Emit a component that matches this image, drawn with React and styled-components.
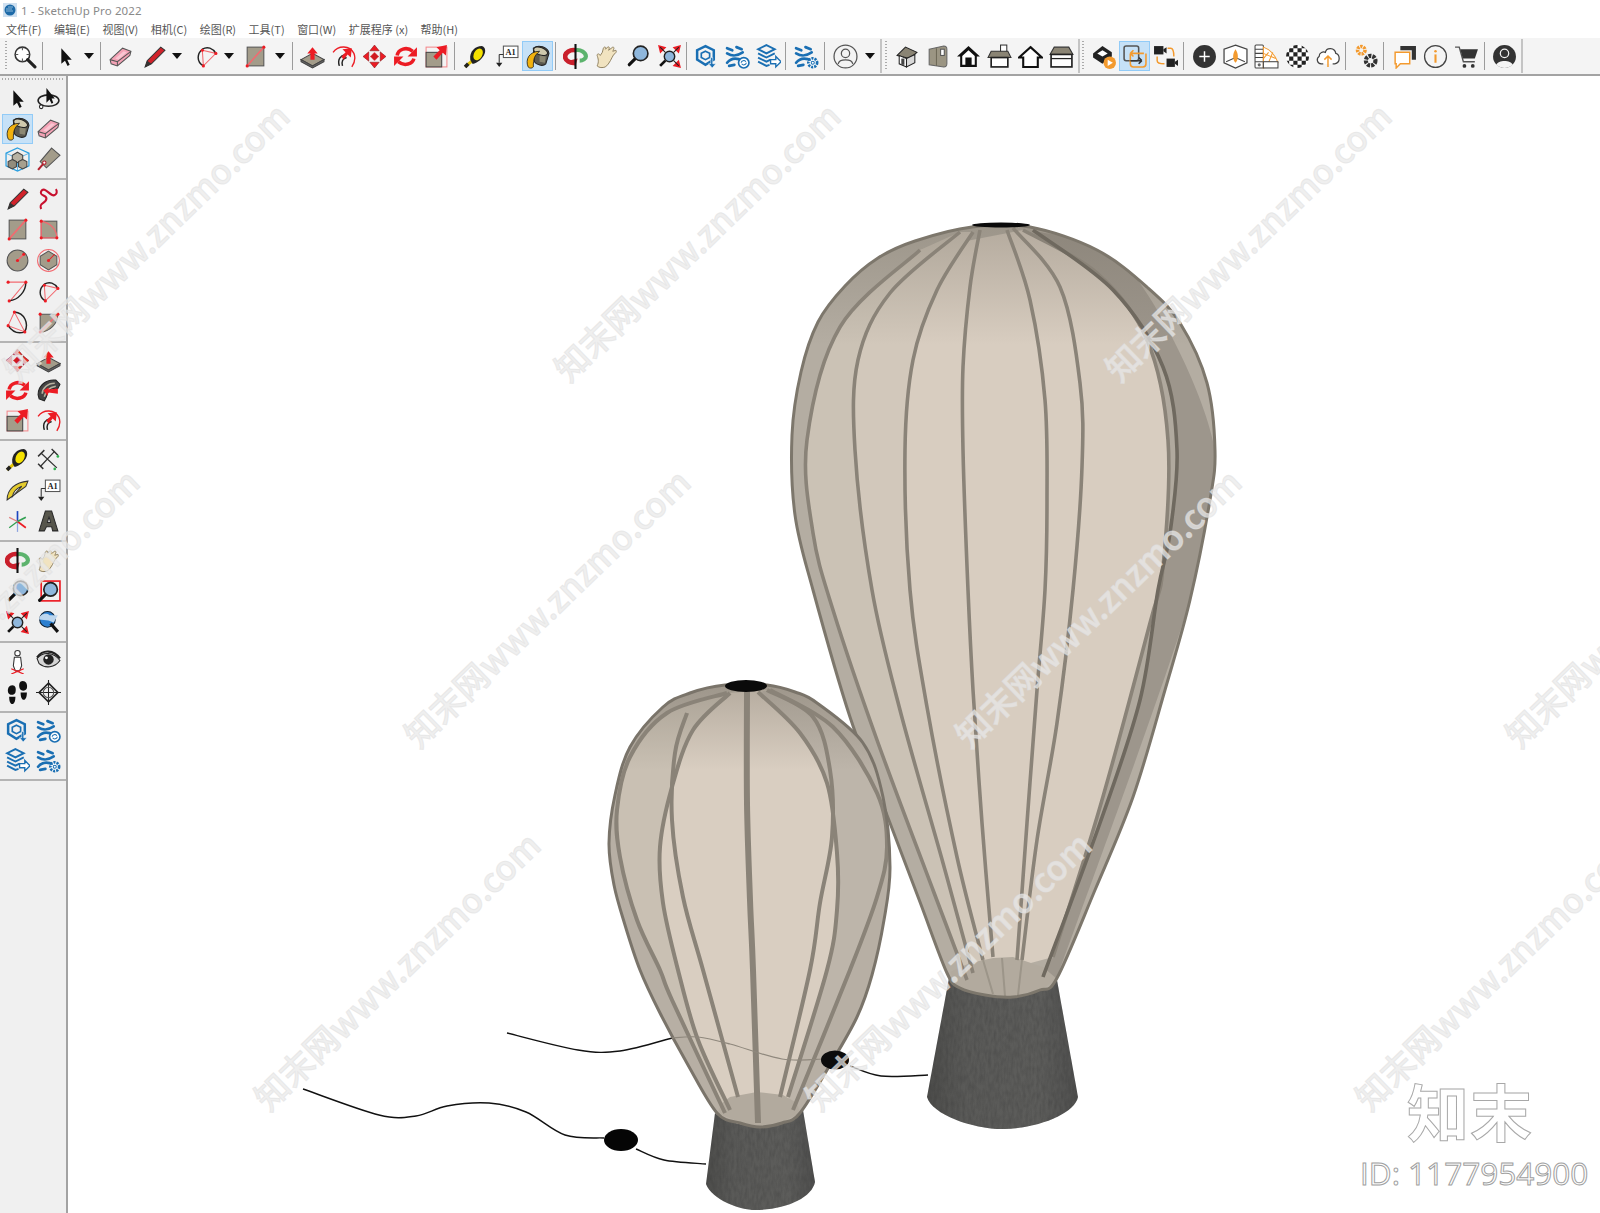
import React from 'react';
import styled, { createGlobalStyle } from 'styled-components';

const R = '#ec1c24';
const FACE = '#a39c8a';
const BLUE = '#1a6fb3';
const ORANGE = '#f39a2e';
const DARK = '#333';

const GlobalStyle = createGlobalStyle`
    html, body {
        margin: 0;
        padding: 0;
        background: #fff;
        overflow: hidden;
    }
`;

const Window = styled.div`
    position: relative;
    width: 1600px;
    height: 1213px;
    overflow: hidden;
    display: flex;
    flex-direction: column;
    background: #fff;
    font-family: "Noto Sans CJK SC", "Noto Sans", sans-serif;
`;

const TitleBar = styled.div`
    height: 20px;
    display: flex;
    align-items: center;
    gap: 4px;
    padding-left: 3px;
    font-family: "Noto Sans", sans-serif;
    font-size: 11.5px;
    letter-spacing: 0.12px;
    color: #8a8a8a;
`;

const MenuBar = styled.div`
    height: 18px;
    display: flex;
    align-items: center;
    gap: 12.5px;
    padding-left: 6px;
    font-size: 11px;
    color: #555;
`;

const MenuItem = styled.span`
    white-space: pre;
    line-height: 18px;
`;

const Toolbar = styled.div`
    height: 36px;
    flex: none;
    display: flex;
    align-items: center;
    padding-left: 3px;
    background: #f4f4f4;
    border-bottom: 2px solid #a3a3a3;
`;

const Grip = styled.div`
    flex: none;
    width: 2px;
    height: 30px;
    margin: 0 ${props => props.$after}px 0 ${props => props.$before}px;
    background-image: linear-gradient(#aaa 50%, transparent 50%);
    background-size: 2px 3px;
`;

const Tool = styled.div`
    flex: none;
    width: 31px;
    height: 30px;
    box-sizing: border-box;
    margin-left: ${props => props.$ml || 0}px;
    display: flex;
    align-items: center;
    justify-content: center;
    background: ${props => (props.$active ? '#c6e1f7' : 'transparent')};
    border: 1px solid ${props => (props.$active ? '#92cbf7' : 'transparent')};
`;

const Caret = styled.div`
    flex: none;
    width: ${props => props.$w}px;
    margin-left: ${props => props.$ml || 0}px;
    display: flex;
    justify-content: center;

    &::after {
        content: '';
        border-left: 5px solid transparent;
        border-right: 5px solid transparent;
        border-top: 6px solid #111;
    }
`;

const Divider = styled.div`
    flex: none;
    width: 1px;
    height: 28px;
    background: #9c9c9c;
    margin-left: ${props => (props.$before === undefined ? 2 : props.$before)}px;
    margin-right: ${props => (props.$after === undefined ? 5 : props.$after)}px;
`;

const ToolbarEnd = styled.div`
    flex: none;
    width: 2px;
    height: 34px;
    margin: 0 ${props => props.$after}px 0 ${props => props.$before}px;
    background: #c4c4c4;
`;

const Body = styled.div`
    flex: 1;
    display: flex;
    min-height: 0;
`;

const SideBar = styled.div`
    width: 66px;
    flex: none;
    padding-top: 2px;
    background: #f0f0f0;
    border-right: 2px solid #a3a3a3;
`;

const SideGrip = styled.div`
    height: 2px;
    margin: 0 2px 3px;
    background-image: linear-gradient(90deg, #aaa 50%, transparent 50%);
    background-size: 3px 2px;
`;

const SideGroup = styled.div`
    display: grid;
    grid-template-columns: 31px 31px;
    grid-auto-rows: ${props => props.$row || 30}px;
    padding: 0 2px 3px;
    justify-items: center;
    align-items: center;
    margin-bottom: 3px;
    border-bottom: 2px solid #b4b4b4;
`;

const SideTool = styled(Tool)`
    height: ${props => (props.$active ? 30 : 28)}px;
`;

const Canvas = styled.div`
    flex: 1;
    min-width: 0;
    background: #fff;
`;

const Scene = styled.svg`
    display: block;
    width: 100%;
    height: 100%;
`;

const IconSvg = styled.svg`
    display: block;
    width: 25px;
    height: 25px;
    flex: none;
`;

const AppGlyph = styled.svg`
    width: 14px;
    height: 14px;
    flex: none;
`;

const WatermarkLayer = styled.div`
    position: absolute;
    inset: 0;
    overflow: hidden;
    pointer-events: none;
`;

const Watermark = styled.span`
    position: absolute;
    white-space: pre;
    font-family: "Noto Sans CJK SC", sans-serif;
    font-size: 34px;
    font-weight: 500;
    line-height: 1;
    color: rgba(234, 234, 234, 0.74);
    -webkit-text-stroke: 1px rgba(224, 224, 224, 0.6);
    transform-origin: 0 100%;
    transform: rotate(-44deg);
`;

const BrandMark = styled.div`
    position: absolute;
    left: 1407px;
    top: 1073px;
    font-family: "Noto Sans CJK SC", sans-serif;
    font-size: 62px;
    font-weight: 700;
    line-height: 1.2;
    letter-spacing: 1px;
    color: #fff;
    -webkit-text-stroke: 1px #a8a8a8;
`;

const BrandId = styled.div`
    position: absolute;
    left: 1360px;
    top: 1153px;
    font-family: "Open Sans", sans-serif;
    font-size: 31.5px;
    line-height: 40px;
    white-space: pre;
    color: #fff;
    -webkit-text-stroke: 1px #a0a0a0;
`;

// ---- icons, all on a 24 box ----

const lens = (cx, cy, r) => (
    <>
        <line x1={cx - r * 0.7} y1={cy + r * 0.7} x2={cx - r * 0.7 - 6} y2={cy + r * 0.7 + 6} stroke="#111" strokeWidth="3" strokeLinecap="round" />
        <circle cx={cx} cy={cy} r={r} fill="#8fb7dc" stroke="#222" strokeWidth="1.6" />
    </>
);

const dot = (x, y) => <circle cx={x} cy={y} r="1.5" fill={R} />;

const Bars = ({ color = BLUE }) => (
    <g fill="none" stroke={color} strokeWidth="2.6" strokeLinecap="round">
        <path d="M2 4 L7 6 M11 3 L16 5 M2 9 C7 12 11 12 17 8" />
        <path d="M2 18 C6 13 11 13 17 16 M4 21 L9 20" />
    </g>
);

const ICONS = {
    zoomGray: (
        <>
            <circle cx="10" cy="10" r="7" fill="#fff" stroke="#333" strokeWidth="1.5" />
            <path d="M10 3v3M10 14v3M3 10h3M14 10h3" stroke="#555" />
            <line x1="15" y1="15" x2="22" y2="22" stroke="#222" strokeWidth="3" strokeLinecap="round" />
        </>
    ),
    select: <path d="M8 4 L8 19 L11.5 16 L14 21 L16 20 L13.7 15 L18 15 Z" fill="#111" />,
    orbitSelect: (
        <>
            <ellipse cx="12" cy="14" rx="10" ry="5.5" fill="none" stroke="#222" strokeWidth="1.5" />
            <path d="M10 2 L10 16 L13 13 L15 17 L16.5 16 L15 12 L18 12 Z" fill="#111" />
            <circle cx="5" cy="20" r="1.7" fill="#fff" stroke="#222" />
        </>
    ),
    eraser: (
        <>
            <path d="M2 15 L14 4 L22 7 L21 11 L9 21 L3 19 Z" fill="#f4a3b6" stroke="#555" />
            <path d="M2 15 L9 17 L22 7 M9 17 L9 21" fill="none" stroke="#555" />
            <path d="M7 14 L15 7 L18 8 L10 15 Z" fill="#f9c6d2" />
        </>
    ),
    pencil: (
        <>
            <path d="M3 22 L5 16 L18 3 L22 6 L9 19 Z" fill="#d1232b" stroke="#333" />
            <path d="M3 22 L5 16 L9 19 Z" fill="#333" />
        </>
    ),
    freehand: (
        <path d="M5 22 C2 16 10 17 10 12 C10 8 3 10 5 5 C8 0 13 9 17 9 C21 8 20 4 19 3" fill="none" stroke="#c8102e" strokeWidth="2" />
    ),
    rect: (
        <>
            <rect x="4" y="3" width="16" height="18" fill={FACE} stroke="#555" />
            <line x1="4" y1="21" x2="20" y2="3" stroke="#f26a70" strokeWidth="1.5" />
            {dot(4, 21)}
            {dot(20, 3)}
        </>
    ),
    rotRect: (
        <>
            <rect x="5" y="4" width="15" height="16" fill={FACE} stroke="#555" />
            <path d="M5 4V20H20 C20 12 14 6 5 4" fill="none" stroke="#f26a70" strokeWidth="1.3" />
            {dot(5, 4)}
            {dot(5, 20)}
            {dot(20, 20)}
        </>
    ),
    circle: (
        <>
            <circle cx="12" cy="12" r="10" fill={FACE} stroke="#555" />
            <line x1="12" y1="12" x2="18" y2="6" stroke="#f26a70" strokeWidth="1.5" />
            {dot(12, 12)}
            {dot(18, 6)}
        </>
    ),
    polygon: (
        <>
            <circle cx="12" cy="12" r="10.5" fill="none" stroke="#f26a70" />
            <path d="M12 3 L20 8 L20 16 L12 21 L4 16 L4 8 Z" fill={FACE} stroke="#555" />
            <line x1="12" y1="12" x2="18" y2="6" stroke={R} />
            {dot(12, 12)}
        </>
    ),
    arc: (
        <>
            <path d="M3 3 H20 L5 21" fill="none" stroke="#f26a70" />
            <path d="M20 3 C20 12 13 20 4 21" fill="none" stroke="#222" strokeWidth="1.4" />
            {dot(3, 3)}
            {dot(20, 3)}
            {dot(4, 21)}
        </>
    ),
    arcPie: (
        <>
            <path d="M8 6 L21 9 L9 21 Z" fill="none" stroke="#f26a70" />
            <path d="M9 21 C2 17 3 9 8 5 C13 2 18 4 21 9" fill="none" stroke="#222" strokeWidth="1.4" />
            {dot(8, 6)}
            {dot(21, 9)}
            {dot(9, 21)}
        </>
    ),
    arc3: (
        <>
            <path d="M9 2 L3 15 L19 21 Z" fill="none" stroke="#f26a70" />
            <path d="M9 2 C19 3 23 13 19 21 C13 23 7 21 3 15" fill="none" stroke="#222" strokeWidth="1.4" />
            {dot(9, 2)}
            {dot(3, 15)}
            {dot(19, 21)}
        </>
    ),
    pie: (
        <>
            <path d="M4 21 L4 4 L21 4 C21 13 13 21 4 21 Z" fill={FACE} stroke="#555" />
            <line x1="4" y1="21" x2="21" y2="4" stroke="#f26a70" strokeWidth="1.4" />
            {dot(4, 21)}
            {dot(4, 4)}
            {dot(21, 4)}
        </>
    ),
    pushpull: (
        <>
            <path d="M1 15 L12 9 L23 15 L12 21 Z" fill={FACE} stroke="#444" />
            <path d="M1 15 V17 L12 23 L23 17 V15 L12 21 Z" fill="#666" stroke="#444" />
            <path d="M12 3 L17 9 H14 V15 H10 V9 H7 Z" fill={R} />
        </>
    ),
    followme: (
        <>
            <path d="M2 8 C7 1 18 1 22 9 C24 14 22 19 20 22" fill="none" stroke={R} strokeWidth="1.3" />
            <path d="M8 21 C6 15 9 11 14 10 M11 21 C10 17 11 14 15 13" fill="none" stroke="#222" strokeWidth="1.4" />
            <path d="M20 4 L19 13 L16 10 L12 15 L10 12 L14 8 L11 5 Z" fill={R} />
        </>
    ),
    move: (
        <>
            <path d="M12 1 L16.5 6.5 H7.5 Z M12 23 L7.5 17.5 H16.5 Z M1 12 L6.5 7.5 V16.5 Z M23 12 L17.5 16.5 V7.5 Z" fill={R} stroke="#7a1115" strokeWidth="0.5" />
            <path d="M12 7.5 L16.5 12 L12 16.5 L7.5 12 Z" fill="#d01a20" stroke="#f4f4f4" strokeWidth="0.8" />
        </>
    ),
    rotate: (
        <>
            <path d="M4 11 C5 5 13 2 19 7" fill="none" stroke={R} strokeWidth="3.4" />
            <path d="M23 3 V12 H14 Z" fill={R} />
            <path d="M20 14 C19 19 11 22 5 17" fill="none" stroke={R} strokeWidth="3.4" />
            <path d="M1 21 V12 H10 Z" fill={R} />
        </>
    ),
    scale: (
        <>
            <rect x="2" y="3" width="20" height="19" fill="none" stroke="#f4888c" />
            <rect x="2" y="8" width="15" height="14" fill={FACE} stroke="#444" />
            <path d="M22 1 L21 11 L18 8.5 L12 15 L9 12 L15 6 L12 3 Z" fill={R} />
        </>
    ),
    tape: (
        <>
            <line x1="2" y1="22" x2="9" y2="16" stroke="#e2c400" strokeWidth="3" />
            <line x1="2" y1="22" x2="5" y2="19" stroke="#222" strokeWidth="3.5" />
            <path d="M7 15 C6 7 12 2 18 2 C22 3 22 8 20 11 C17 16 12 19 9 19 Z" fill="#222" />
            <ellipse cx="14.5" cy="10" rx="4" ry="6" transform="rotate(30 14.5 10)" fill="#f6e200" />
        </>
    ),
    protractor: (
        <>
            <path d="M2 21 C2 11 10 4 22 3 L20 8 Z" fill="#e5cc2e" stroke="#333" />
            <path d="M7 18 C8 13 11 10 16 8 Z" fill="#fff" stroke="#333" />
        </>
    ),
    text: (
        <>
            <rect x="9" y="2" width="14" height="11" fill="#fff" stroke="#555" />
            <text x="16" y="10.5" textAnchor="middle" fontSize="8" fontFamily="Liberation Serif, serif" fontWeight="700" fill="#222">A1</text>
            <path d="M5 10 V18 M9 10 H5" fill="none" stroke="#333" />
            <path d="M2 18 H8 L5 22 Z" fill="#222" />
        </>
    ),
    paint: (
        <>
            <path d="M8 4 C13 0 22 3 23 9 L20 19 C17 22 11 20 9 17 Z" fill="#5c5a50" stroke="#222" />
            <ellipse cx="15" cy="7" rx="7" ry="3.6" transform="rotate(20 15 7)" fill="#cfc9ad" stroke="#222" />
            <path d="M3 22 C0 15 4 7 14 7 C9 11 8 14 8 22 C6 24 4 23 3 22 Z" fill="#f1b10e" stroke="#222" strokeWidth="0.8" />
            <path d="M14 11 L20 12 L19 18 L14 17 Z" fill="#8c8873" />
        </>
    ),
    component: (
        <>
            <path d="M12 1 L23 6 V18 L12 23 L1 18 V6 Z" fill="none" stroke="#2a9fe0" strokeWidth="1.2" />
            <path d="M1 6 L12 11 L23 6 M12 11 V23" fill="none" stroke="#2a9fe0" strokeWidth="0.7" />
            <path d="M12 5 L17 8 V12 L12 15 L7 12 V8 Z" fill="#b8b2a2" stroke="#444" />
            <path d="M7 12 L11 14 V19 L7 21 L3 19 V14 Z" fill="#928c7c" stroke="#444" />
            <path d="M17 12 L21 14 V19 L17 21 L13 19 V14 Z" fill="#a6a08f" stroke="#444" />
        </>
    ),
    tag: (
        <>
            <path d="M15 1 L23 8 L10 20 L4 14 Z" fill={FACE} stroke="#555" />
            <line x1="2" y1="22" x2="8" y2="15" stroke="#b21f2d" strokeWidth="2" />
            <circle cx="8" cy="15" r="1.6" fill="#fff" stroke="#b21f2d" />
        </>
    ),
    sweep: (
        <>
            <path d="M2 16 C2 7 10 1 19 2 L23 6 L21 10 C15 9 11 12 10 18 L8 22 L3 20 Z" fill="#444" stroke="#222" />
            <path d="M6 15 C6 10 11 5 18 5 M8 18 C9 13 13 9 19 8" fill="none" stroke="#b9b29f" strokeWidth="1.5" />
            <path d="M21 10 L21 15 L12 14 L11 17 L7 12 L12 9 L12 11 Z" fill={R} />
        </>
    ),
    dims: (
        <>
            <path d="M5 6 L20 20 M18 4 L4 19" fill="none" stroke="#333" strokeWidth="1.2" />
            <path d="M2 9 L8 3 M15 2 L21 8 M2 16 L7 21" fill="none" stroke="#333" strokeWidth="1.4" />
            <circle cx="21" cy="9" r="1.3" fill="#30b050" />
            <circle cx="18" cy="21" r="1.3" fill="#30b050" />
        </>
    ),
    axes: (
        <>
            <line x1="12" y1="12" x2="12" y2="2" stroke="#1c46c0" strokeWidth="1.6" />
            <line x1="12" y1="12" x2="12" y2="22" stroke="#8fa5e0" strokeWidth="1.2" />
            <line x1="12" y1="12" x2="20" y2="18" stroke={R} strokeWidth="1.6" />
            <line x1="12" y1="12" x2="4" y2="18" stroke="#30a050" strokeWidth="1.2" />
            <line x1="12" y1="12" x2="20" y2="8" stroke="#30a050" strokeWidth="1.6" />
            <line x1="12" y1="12" x2="4" y2="8" stroke="#e08080" strokeWidth="1.2" />
        </>
    ),
    text3d: (
        <path d="M9 2 H15 L21 21 H16 L15 17 H10 L8 21 H3 Z M11 13 H14 L12.5 7 Z" fill="#57564c" stroke="#2a2a2a" fillRule="evenodd" />
    ),
    orbit: (
        <>
            <path d="M12 6 C7 5 2 8 2 12 C2 16 7 19 12 18" fill="none" stroke="#c9202c" strokeWidth="4.5" />
            <path d="M5 16 L14 14 L12 21 Z" fill="#c9202c" />
            <path d="M12 6 C17 5 22 8 22 12 C22 14 19 16 16 16" fill="none" stroke="#5cb36d" strokeWidth="4" />
            <line x1="12" y1="0" x2="12" y2="24" stroke="#111" strokeWidth="2" />
        </>
    ),
    pan: (
        <path
            d="M3 21 C5 17 4 14 3 11 C3 9 5 9 6 11 L8 8 L9 4 C10 2 12 3 11 5 L13 3 C15 2 15 4 14 6 L18 3 C20 3 19 5 18 7 L21 6 C22 7 21 9 19 10 C17 13 15 19 11 22 C8 23 5 23 3 21 Z"
            fill="#f1e3c0"
            stroke="#8c7d5c"
            strokeWidth="0.9"
        />
    ),
    zoom: lens(15, 9, 7),
    zoomWindow: (
        <>
            <rect x="5" y="2" width="18" height="19" fill="none" stroke={R} strokeWidth="1.6" />
            {lens(14, 10, 6.5)}
        </>
    ),
    zoomExt: (
        <>
            <line x1="8" y1="16" x2="3" y2="21" stroke="#111" strokeWidth="2.6" />
            <circle cx="12" cy="12" r="5" fill="#8fb7dc" stroke="#222" strokeWidth="1.4" />
            <path d="M1 1 L9 3 L3 9 Z M23 1 L15 3 L21 9 Z M23 23 L21 15 L15 21 Z" fill={R} />
            <path d="M3 3 L8 8 M21 3 L16 8 M21 21 L16 16" stroke="#222" />
        </>
    ),
    zoomPrev: (
        <>
            <circle cx="11" cy="9" r="7.5" fill="#2b7fd0" stroke="#123" />
            <path d="M3 9 C3 4 10 2 13 5 L21 5 L17 12 L12 10 Z" fill="#bcd6ee" />
            <line x1="14" y1="13" x2="21" y2="21" stroke="#111" strokeWidth="3" />
        </>
    ),
    position: (
        <>
            <circle cx="12" cy="4" r="2.6" fill="#fff" stroke="#333" />
            <path d="M9 8 H15 L16 16 L14 21 H10 L8 16 Z" fill="#fff" stroke="#333" />
            <path d="M6 19 L18 24 M18 19 L6 24" stroke={R} strokeWidth="1.2" />
        </>
    ),
    lookAround: (
        <>
            <path d="M1 9 C7 2 17 3 23 11 C18 18 9 19 3 14 Z" fill="#d4d4d4" stroke="#222" />
            <circle cx="12" cy="10" r="5" fill="#222" />
            <circle cx="10" cy="8.5" r="1.4" fill="#fff" />
            <path d="M1 8 C7 0 17 1 23 9" fill="none" stroke="#222" strokeWidth="2" />
        </>
    ),
    walk: (
        <>
            <path d="M7 5 C10 5 11 8 10 12 C9 15 4 15 3 12 C2 8 4 5 7 5 Z M4 16 H10 C10 20 9 23 7 23 C5 23 4 20 4 16 Z" fill="#111" />
            <path d="M17 1 C20 1 22 4 21 8 C20 11 15 11 14 8 C13 4 14 1 17 1 Z M15 12 H21 C21 16 20 19 18 19 C16 19 15 16 15 12 Z" fill="#111" />
        </>
    ),
    section: (
        <>
            <path d="M12 3 L21 12 L12 21 L3 12 Z" fill="none" stroke="#222" strokeWidth="1.6" />
            <path d="M0 12 H24 M12 0 V24" stroke="#222" />
            <circle cx="12" cy="12" r="5" fill="none" stroke="#555" />
        </>
    ),
    wh3d: (
        <>
            <path d="M11 2 L19 6 V15 L11 20 L3 15 V6 Z" fill="none" stroke={BLUE} strokeWidth="2.4" />
            <path d="M11 7 L15 9 V13 L11 15 L7 13 V9 Z" fill="none" stroke={BLUE} strokeWidth="1.6" />
            <path d="M18 13 V19 H21 L17.5 23 L14 19 H16 V13 Z" fill={BLUE} stroke="#fff" strokeWidth="0.5" />
        </>
    ),
    extSwap: (
        <>
            <Bars />
            <circle cx="18" cy="18" r="5" fill="#fff" stroke={BLUE} strokeWidth="1.6" />
            <path d="M15.5 18 A2.5 2.5 0 0 1 20 17 M20.5 18 A2.5 2.5 0 0 1 16 19" fill="none" stroke={BLUE} />
        </>
    ),
    extStack: (
        <>
            <path d="M10 1 L18 5 L10 9 L2 5 Z" fill="none" stroke={BLUE} strokeWidth="1.8" />
            <path d="M2 9 L10 13 L18 9 M2 13 L10 17 L14 15 M2 17 L10 21 L13 20" fill="none" stroke={BLUE} strokeWidth="1.8" />
            <path d="M14 15 H19 V12 L24 17 L19 22 V19 H14 Z" fill="#fff" stroke={BLUE} strokeWidth="1.3" />
        </>
    ),
    extGear: (
        <>
            <Bars />
            <circle cx="18" cy="18" r="4.2" fill="#fff" stroke={BLUE} strokeWidth="2.6" strokeDasharray="2 1" />
            <circle cx="18" cy="18" r="1.5" fill="#fff" stroke={BLUE} />
        </>
    ),
    user: (
        <>
            <circle cx="12" cy="12" r="11" fill="none" stroke="#555" strokeWidth="1.2" />
            <circle cx="12" cy="9" r="4" fill="none" stroke="#555" strokeWidth="1.2" />
            <path d="M5 19 C6 14 18 14 19 19" fill="none" stroke="#555" strokeWidth="1.2" />
        </>
    ),
    iso: (
        <>
            <path d="M3 11 L11 3 L22 8 L15 14 Z" fill="#8a8474" stroke="#222" />
            <path d="M5 11 L5 19 L12 22 L12 14 Z" fill="#fff" stroke="#222" />
            <path d="M12 14 L20 10 V18 L12 22 Z" fill="#d8d8d8" stroke="#222" />
            <rect x="7" y="14" width="3" height="6" fill="#444" />
        </>
    ),
    front: (
        <>
            <path d="M4 5 L18 2 C20 2 21 3 21 5 V19 C21 21 20 22 18 22 L4 20 Z" fill="#9b9583" stroke="#666" />
            <line x1="11" y1="4" x2="11" y2="21" stroke="#6e6958" />
            <rect x="15" y="5" width="3.5" height="6" fill="#fff" stroke="#555" />
        </>
    ),
    home: (
        <>
            <path d="M12 2 L23 12 H20 V22 H4 V12 H1 Z" fill="#111" />
            <path d="M12 6 L18 11.5 V20 H15 V13 H9 V20 H6 V11.5 Z" fill="#fff" />
        </>
    ),
    top: (
        <>
            <rect x="13" y="1" width="6" height="7" fill="#fff" stroke="#333" />
            <path d="M4 7 H20 L23 13 H1 Z" fill="#8a8474" stroke="#333" />
            <rect x="4" y="13" width="16" height="9" fill="#fff" stroke="#222" strokeWidth="1.6" />
        </>
    ),
    outlineHouse: <path d="M12 3 L23 13 H19 V22 H5 V13 H1 Z" fill="#fff" stroke="#111" strokeWidth="2" />,
    back: (
        <>
            <path d="M5 3 H19 L23 10 H1 Z" fill="#8a8474" stroke="#333" />
            <rect x="2" y="10" width="20" height="12" fill="#fff" stroke="#222" strokeWidth="1.6" />
            <line x1="2" y1="14" x2="22" y2="14" stroke="#222" strokeWidth="1.2" />
        </>
    ),
    tutorial: (
        <>
            <path d="M2 9 L11 2 L20 8 V12 L11 19 L2 13 Z" fill="#222" />
            <path d="M6 9 L11 6 L16 9 L11 12 Z" fill="#fff" />
            <circle cx="18" cy="18" r="6" fill={ORANGE} />
            <path d="M16 15 L21 18 L16 21 Z" fill="#fff" />
        </>
    ),
    swap: (
        <>
            <rect x="2" y="2" width="14" height="14" rx="2" fill="none" stroke="#555" strokeWidth="1.5" />
            <path d="M8 9 H21 M8 9 L11 6 M8 9 L11 12" fill="none" stroke={ORANGE} strokeWidth="1.5" />
            <path d="M8 9 V19 C8 21 9 22 11 22 H20 C22 22 23 21 23 19 V9" fill="none" stroke={ORANGE} strokeWidth="1.5" />
            <path d="M8 16 H19 M19 16 L16 13 M19 16 L16 19" fill="none" stroke="#333" strokeWidth="1.5" />
        </>
    ),
    camSwap: (
        <>
            <rect x="1" y="2" width="9" height="8" fill="#222" />
            <path d="M10 5 L13 3 V9 L10 7 Z" fill="#222" />
            <rect x="13" y="14" width="8" height="8" fill="#222" />
            <path d="M21 17 L24 15 V21 L21 19 Z" fill="#222" />
            <path d="M14 4 H17 C19 4 20 6 20 12 M4 12 V16 C4 18 6 19 11 19" fill="none" stroke={ORANGE} strokeWidth="1.4" />
        </>
    ),
    plus: (
        <>
            <circle cx="12" cy="12" r="11" fill={DARK} />
            <path d="M12 7 V17 M7 12 H17" stroke="#fff" strokeWidth="1.4" />
        </>
    ),
    cone: (
        <>
            <path d="M12 1 L23 5 V18 L12 23 L1 18 V5 Z" fill="#fff" stroke="#444" strokeWidth="1.2" />
            <path d="M3 17 L12 13 L21 17" fill="none" stroke="#444" />
            <path d="M12 5 C15 9 15 15 12 18 C9 15 9 9 12 5 Z" fill={ORANGE} />
        </>
    ),
    material: (
        <>
            <rect x="1" y="1" width="8" height="22" rx="1" fill="#fff" stroke="#444" />
            <path d="M1 5 H9 M1 9 H9 M1 13 H9 M1 17 H9" stroke="#444" />
            <circle cx="5" cy="20" r="1.5" fill="#666" />
            <path d="M9 3 C15 5 21 11 23 18 L9 23 Z" fill="#fff" stroke={ORANGE} />
            <path d="M9 9 L21 14 M9 14 L14 8 M13 20 L18 8" stroke={ORANGE} />
            <rect x="9" y="17" width="14" height="6" fill="#fff" stroke="#444" />
        </>
    ),
    checker: (
        <>
            <clipPath id="chk"><circle cx="12" cy="12" r="11" /></clipPath>
            <g clipPath="url(#chk)">
                <rect width="24" height="24" fill="#fff" />
                <path fill="#222" d="M0 0h4v4H0zM8 0h4v4H8zM16 0h4v4h-4zM4 4h4v4H4zM12 4h4v4h-4zM20 4h4v4h-4zM0 8h4v4H0zM8 8h4v4H8zM16 8h4v4h-4zM4 12h4v4H4zM12 12h4v4h-4zM20 12h4v4h-4zM0 16h4v4H0zM8 16h4v4H8zM16 16h4v4h-4zM4 20h4v4H4zM12 20h4v4h-4zM20 20h4v4h-4z" />
            </g>
        </>
    ),
    cloud: (
        <>
            <path d="M7 19 H5 C1 19 0 14 3 12 C3 8 7 7 9 8 C10 3 18 3 19 9 C23 10 24 18 18 19 H16" fill="#fff" stroke="#444" strokeWidth="1.2" />
            <path d="M11.5 22 V12 M8 15 L11.5 11.5 L15 15" fill="none" stroke={ORANGE} strokeWidth="1.4" />
        </>
    ),
    gears: (
        <>
            <circle cx="7" cy="6" r="3.6" fill="none" stroke={ORANGE} strokeWidth="3.4" strokeDasharray="2.2 0.9" />
            <circle cx="16" cy="16" r="4.6" fill="none" stroke={DARK} strokeWidth="4" strokeDasharray="2.8 1" />
        </>
    ),
    chat: (
        <>
            <path d="M8 2 H23 V15 H19 V6 H8 Z" fill={DARK} />
            <path d="M3 8 H17 V19 H8 L4 23 V19 H3 Z" fill="#fff" stroke={ORANGE} strokeWidth="1.4" />
        </>
    ),
    info: (
        <>
            <circle cx="12" cy="12" r="10.5" fill="none" stroke="#444" strokeWidth="1.2" />
            <circle cx="12" cy="7" r="1.2" fill={ORANGE} />
            <rect x="11" y="10" width="2" height="8" fill={ORANGE} />
        </>
    ),
    cart: (
        <>
            <path d="M1 3 H5 L9 17 H20" fill="none" stroke="#555" strokeWidth="1.3" />
            <path d="M6 5 H23 L20 14 H8.5 Z" fill={DARK} />
            <circle cx="10" cy="21" r="1.8" fill={DARK} />
            <circle cx="18" cy="21" r="1.8" fill={DARK} />
        </>
    ),
    account: (
        <>
            <circle cx="12" cy="12" r="11" fill={DARK} />
            <circle cx="12" cy="9" r="4.6" fill="#f4f4f4" />
            <circle cx="12" cy="9" r="3.4" fill={DARK} />
            <path d="M4 20 C6 15 18 15 20 20 C16 24 8 24 4 20 Z" fill="#f4f4f4" />
        </>
    ),
};

const Icon = ({ name }) => <IconSvg viewBox="0 0 24 24">{ICONS[name]}</IconSvg>;

// ---- toolbar contents, in left to right order ----

const sep = (before, after) => ({ kind: 'sep', before, after });
const caret = (w, ml) => ({ kind: 'caret', w, ml });
const tools = (...names) => names.map(name => ({ kind: 'tool', name }));

const TOP_ITEMS = [
    { kind: 'grip', before: 2, after: 2 },
    ...tools('zoomGray'),
    sep(2, 7),
    ...tools('select'),
    caret(16),
    sep(3, 4),
    ...tools('eraser'),
    { kind: 'tool', name: 'pencil', ml: 3 },
    caret(14),
    { kind: 'tool', name: 'arcPie', ml: 7 },
    caret(14),
    { kind: 'tool', name: 'rect', ml: 4 },
    caret(14, 2),
    sep(5, 4),
    ...tools('pushpull', 'followme', 'move', 'rotate', 'scale'),
    sep(),
    ...tools('tape', 'text'),
    { kind: 'tool', name: 'paint', active: true },
    sep(2, 4),
    ...tools('orbit', 'pan', 'zoom'),
    { kind: 'tool', name: 'zoomExt', ml: 1 },
    sep(1, 4),
    ...tools('wh3d', 'extSwap', 'extStack'),
    sep(1, 5),
    ...tools('extGear'),
    sep(),
    ...tools('user'),
    caret(17),
    { kind: 'end', before: 2, after: 3 },
    { kind: 'grip', before: 0, after: 4 },
    ...tools('iso', 'front', 'home', 'top', 'outlineHouse', 'back'),
    { kind: 'end', before: 1, after: 2 },
    { kind: 'grip', before: 0, after: 4 },
    ...tools('tutorial'),
    { kind: 'tool', name: 'swap', active: true },
    ...tools('camSwap'),
    sep(),
    ...tools('plus', 'cone', 'material', 'checker', 'cloud'),
    sep(1, 5),
    ...tools('gears'),
    sep(1, 5),
    ...tools('chat', 'info', 'cart'),
    sep(2, 4),
    ...tools('account'),
    { kind: 'end', before: 1, after: 0 },
];

const SIDE_GROUPS = [
    { row: 30.5, names: ['select', 'orbitSelect', 'paint', 'eraser', 'component', 'tag'] },
    {
        row: 31,
        names: ['pencil', 'freehand', 'rect', 'rotRect', 'circle', 'polygon', 'arc', 'arcPie', 'arc3', 'pie'],
    },
    { row: 30, names: ['move', 'pushpull', 'rotate', 'sweep', 'scale', 'followme'] },
    { row: 31, names: ['tape', 'dims', 'protractor', 'text', 'axes', 'text3d'] },
    { row: 31, names: ['orbit', 'pan', 'zoom', 'zoomWindow', 'zoomExt', 'zoomPrev'] },
    { row: 31, names: ['position', 'lookAround', 'walk', 'section'] },
    { row: 30, names: ['wh3d', 'extSwap', 'extStack', 'extGear'] },
];

const MENUS = ['文件(F)', '编辑(E)', '视图(V)', '相机(C)', '绘图(R)', '工具(T)', '窗口(W)', '扩展程序 (x)', '帮助(H)'];

const renderTopItem = (item, i) => {
    switch (item.kind) {
        case 'grip':
            return <Grip key={i} $before={item.before} $after={item.after} />;
        case 'sep':
            return <Divider key={i} $before={item.before} $after={item.after} />;
        case 'caret':
            return <Caret key={i} $w={item.w} $ml={item.ml} />;
        case 'end':
            return <ToolbarEnd key={i} $before={item.before} $after={item.after} />;
        default:
            return (
                <Tool key={i} $active={item.active} $ml={item.ml}>
                    <Icon name={item.name} />
                </Tool>
            );
    }
};

// ---- lamps ----

// catmull-rom through the points, the lamps are measured as point lists
const smooth = (pts, closed = false) => {
    const at = i => (closed ? pts[(i + pts.length) % pts.length] : pts[Math.max(0, Math.min(pts.length - 1, i))]);
    let d = `M${pts[0][0]} ${pts[0][1]}`;
    const last = closed ? pts.length : pts.length - 1;
    for (let i = 0; i < last; i++) {
        const [p0, p1, p2, p3] = [at(i - 1), at(i), at(i + 1), at(i + 2)];
        const c1 = [p1[0] + (p2[0] - p0[0]) / 6, p1[1] + (p2[1] - p0[1]) / 6];
        const c2 = [p2[0] - (p3[0] - p1[0]) / 6, p2[1] - (p3[1] - p1[1]) / 6];
        d += ` C${c1[0].toFixed(1)} ${c1[1].toFixed(1)} ${c2[0].toFixed(1)} ${c2[1].toFixed(1)} ${p2[0]} ${p2[1]}`;
    }
    return closed ? `${d}Z` : d;
};

const band = (a, b) => `${smooth(a)} ${smooth([...b].reverse()).replace('M', 'L')}Z`;
const facets = pts => `M${pts.map(p => p.join(' ')).join(' L')}Z`;

const BIG = {
    id: 'big',
    ribWidth: 3.6,
    body: '#b4ada2',
    outline: [
        [972, 227], [915, 241], [878, 258], [845, 286], [818, 322], [801, 372], [792, 435], [795, 515], [813, 590],
        [850, 717], [890, 823], [920, 902], [947, 973], [960, 988], [985, 995], [1013, 997], [1040, 990], [1057, 978],
        [1095, 890], [1133, 797], [1165, 690], [1190, 600], [1210, 500], [1215, 450], [1207, 383], [1180, 323],
        [1147, 287], [1097, 250], [1030, 227],
    ],
    ribs: {
        f: [[920, 250], [840, 327], [807, 440], [813, 533], [833, 610], [877, 740], [933, 890], [967, 980]],
        e: [[960, 232], [890, 293], [858, 360], [855, 450], [872, 590], [900, 710], [943, 863], [973, 973]],
        d: [[973, 232], [937, 290], [913, 360], [905, 450], [910, 590], [927, 707], [957, 857], [983, 960]],
        a: [[980, 230], [970, 287], [963, 367], [963, 450], [968, 590], [973, 690], [982, 823], [993, 957]],
        b: [[1007, 230], [1030, 300], [1045, 400], [1047, 500], [1045, 590], [1037, 690], [1027, 823], [1017, 960]],
        c: [[1013, 228], [1060, 287], [1080, 383], [1082, 467], [1073, 590], [1057, 723], [1037, 840], [1022, 960]],
        h: [[1023, 230], [1097, 273], [1147, 340], [1168, 440], [1163, 567], [1150, 623], [1100, 807], [1053, 957]],
        g: [[1033, 230], [1113, 290], [1163, 367], [1177, 450], [1170, 533], [1158, 590], [1140, 700], [1100, 823], [1043, 977]],
    },
    darkRibs: ['g'],
    shades: [
        { from: 'f', to: 'h', fill: '#d8cdc0' },
        { from: 'f', to: 'e', fill: '#cbc2b5' },
        { from: 'e', to: 'd', fill: '#d2c8bb' },
        { from: 'h', to: 'g', fill: '#b0a99e' },
    ],
    rightShade: { from: 'g', fill: '#9d968c', edge: [[1033, 230], [1130, 270], [1215, 450], [1190, 600], [1057, 978]] },
    cup: [[950, 972], [970, 963], [993, 958], [1013, 957], [1043, 967], [1057, 979], [1040, 990], [1013, 996], [985, 995], [957, 986]],
    cap: { cx: 1001, cy: 225, rx: 29, ry: 2.5 },
    topShade: [227, 345],
    cupRibs: [[[983, 960], [993, 994]], [[1002, 958], [1005, 996]], [[1022, 960], [1018, 995]]],
    rim: '#7d776c',
};

const SMALL = {
    id: 'small',
    ribWidth: 4,
    body: '#b7afa4',
    outline: [
        [725, 685], [690, 693], [663, 707], [630, 747], [615, 795], [609, 843], [614, 885], [625, 925], [640, 970],
        [660, 1013], [688, 1065], [717, 1113], [740, 1123], [760, 1127], [782, 1123], [800, 1113], [830, 1065],
        [857, 1017], [872, 975], [884, 920], [890, 867], [883, 797], [863, 743], [817, 703], [795, 692], [767, 685],
    ],
    ribs: {
        l3: [[727, 693], [667, 713], [630, 757], [617, 810], [620, 857], [637, 920], [660, 970], [672, 1000], [725, 1113]],
        l1: [[730, 693], [693, 730], [672, 787], [660, 847], [663, 903], [678, 970], [698, 1040], [730, 1110]],
        l2: [[687, 713], [675, 753], [672, 820], [683, 897], [703, 970], [738, 1097]],
        mid: [[747, 690], [747, 803], [750, 900], [753, 970], [758, 1123]],
        r2: [[767, 690], [813, 717], [830, 770], [832, 837], [820, 903], [810, 970], [780, 1097]],
        r1: [[758, 692], [800, 733], [827, 783], [837, 853], [837, 910], [827, 970], [788, 1097]],
        r3: [[770, 690], [833, 727], [877, 793], [887, 847], [877, 897], [850, 970], [793, 1110]],
    },
    darkRibs: [],
    shades: [
        { from: 'l3', to: 'r3', fill: '#d9cec1' },
        { from: 'l3', to: 'l1', fill: '#c9c0b3' },
        { from: 'r1', to: 'r3', fill: '#bdb5aa' },
    ],
    cup: [[722, 1103], [730, 1097], [757, 1092], [783, 1095], [797, 1103], [800, 1113], [782, 1122], [760, 1126], [740, 1122], [717, 1113]],
    cap: { cx: 746, cy: 686, rx: 21, ry: 6 },
    topShade: [685, 770],
    cupRibs: [],
    rim: '#7a746a',
};

const Lamp = ({ lamp }) => {
    const outline = smooth(lamp.outline, true);
    return (
        <g>
            <linearGradient id={`${lamp.id}-top`} gradientUnits="userSpaceOnUse" x1="0" x2="0" y1={lamp.topShade[0]} y2={lamp.topShade[1]}>
                <stop offset="0" stopColor="#6f685c" stopOpacity="0.34" />
                <stop offset="1" stopColor="#6f685c" stopOpacity="0" />
            </linearGradient>
            <clipPath id={`${lamp.id}-clip`}>
                <path d={outline} />
            </clipPath>
            <path d={outline} fill={lamp.body} />
            <g clipPath={`url(#${lamp.id}-clip)`}>
                {lamp.rightShade && (
                    <path d={band(lamp.ribs[lamp.rightShade.from], lamp.rightShade.edge)} fill={lamp.rightShade.fill} />
                )}
                {lamp.shades.map(s => (
                    <path key={s.from + s.to} d={band(lamp.ribs[s.from], lamp.ribs[s.to])} fill={s.fill} />
                ))}
                <path d={outline} fill={`url(#${lamp.id}-top)`} />
                <path d={facets(lamp.cup)} fill="#b2aa9e" />
                {Object.entries(lamp.ribs).map(([key, pts]) => (
                    <path
                        key={key}
                        d={smooth(pts)}
                        fill="none"
                        stroke={lamp.darkRibs.includes(key) ? '#6f695f' : '#8a8378'}
                        strokeWidth={key === 'mid' ? 6 : lamp.ribWidth}
                    />
                ))}
                {lamp.cupRibs.map((pts, i) => (
                    <path key={i} d={smooth(pts)} stroke="#9c9589" strokeWidth="2" fill="none" />
                ))}
            </g>
            <path d={outline} fill="none" stroke={lamp.rim} strokeWidth="3" />
            <ellipse {...lamp.cap} fill="#0a0a0a" />
        </g>
    );
};

const BIG_BASE = 'M949 978 L927 1097 C932 1115 975 1130 1005 1129 C1040 1128 1075 1113 1078 1097 L1057 980 C1040 992 1025 997 1005 997 C985 997 960 990 949 978Z';
const SMALL_BASE = 'M715 1113 L706 1184 C712 1200 740 1210 755 1210 C785 1210 812 1198 815 1182 L803 1110 C790 1120 775 1126 760 1127 C745 1126 725 1122 715 1113Z';

const CORD_STROKE = { fill: 'none', stroke: '#111', strokeWidth: 1.4 };

const LampScene = () => (
    <Scene viewBox="68 76 1532 1137">
        <defs>
            <linearGradient id="concrete" x1="0" x2="1" y1="0" y2="0">
                <stop offset="0" stopColor="#4c4c4a" />
                <stop offset="0.25" stopColor="#5a5a58" />
                <stop offset="0.75" stopColor="#5d5d5b" />
                <stop offset="1" stopColor="#4f4f4e" />
            </linearGradient>
            <filter id="grain" x="0" y="0" width="100%" height="100%" colorInterpolationFilters="sRGB">
                <feTurbulence type="fractalNoise" baseFrequency="0.35 0.12" numOctaves="2" seed="4" />
                <feColorMatrix values="0 0 0 0 0.2  0 0 0 0 0.2  0 0 0 0 0.2  0 0 0 0.5 -0.16" />
                <feComposite in2="SourceGraphic" operator="in" />
            </filter>
        </defs>

        <path {...CORD_STROKE} d={smooth([[507, 1033], [578, 1050], [620, 1051], [672, 1038]])} />
        <path {...CORD_STROKE} d={smooth([[850, 1066], [881, 1076], [928, 1075]])} />

        <path d={BIG_BASE} fill="url(#concrete)" />
        <path d={BIG_BASE} fill="#fff" filter="url(#grain)" />
        <Lamp lamp={BIG} />

        <path {...CORD_STROKE} d={smooth([[303, 1089], [379, 1115], [416, 1116], [447, 1106], [489, 1103], [526, 1112], [565, 1135], [604, 1138]])} />
        <path {...CORD_STROKE} d={smooth([[636, 1149], [664, 1160], [706, 1164]])} />
        <ellipse cx="621" cy="1140" rx="17" ry="11" fill="#050505" />

        <path d={SMALL_BASE} fill="url(#concrete)" />
        <path d={SMALL_BASE} fill="#fff" filter="url(#grain)" />
        <Lamp lamp={SMALL} />

        <path d={smooth([[672, 1038], [698, 1037], [730, 1044], [782, 1059], [824, 1059]])} fill="none" stroke="#8f887d" strokeWidth="1.2" />
        <ellipse cx="835" cy="1060" rx="14" ry="9.5" fill="#0c0c0c" />
    </Scene>
);

// lower left corner of each watermark, page coordinates
const MARKS = [
    [0, 386], [551, 386], [1102, 386],
    [-150, 752], [401, 752], [952, 752], [1502, 752],
    [251, 1115], [802, 1115], [1352, 1115],
];

const App = () => (
    <>
        <GlobalStyle />
        <Window>
            <TitleBar>
                <AppGlyph viewBox="0 0 14 14">
                    <rect width="14" height="14" fill="#cfe0f0" />
                    <circle cx="7" cy="7" r="5.5" fill="#1d6aa8" />
                    <path d="M3 6 H9 M3 8 H10 M5 4 H10" stroke="#a7cbe6" strokeWidth="0.8" />
                </AppGlyph>
                1 - SketchUp Pro 2022
            </TitleBar>
            <MenuBar>
                {MENUS.map(label => (
                    <MenuItem key={label}>{label}</MenuItem>
                ))}
            </MenuBar>
            <Toolbar>{TOP_ITEMS.map(renderTopItem)}</Toolbar>
            <Body>
                <SideBar>
                    <SideGrip />
                    {SIDE_GROUPS.map((group, g) => (
                        <SideGroup key={g} $row={group.row}>
                            {group.names.map(name => (
                                <SideTool key={name} $active={name === 'paint'}>
                                    <Icon name={name} />
                                </SideTool>
                            ))}
                        </SideGroup>
                    ))}
                </SideBar>
                <Canvas>
                    <LampScene />
                </Canvas>
            </Body>
            <WatermarkLayer>
                {MARKS.map(([x, y]) => (
                    <Watermark key={`${x}-${y}`} style={{ left: x + 20, top: y - 34 }}>
                        知末网www.znzmo.com
                    </Watermark>
                ))}
            </WatermarkLayer>
            <BrandMark>知末</BrandMark>
            <BrandId>ID: 1177954900</BrandId>
        </Window>
    </>
);

export default App;
